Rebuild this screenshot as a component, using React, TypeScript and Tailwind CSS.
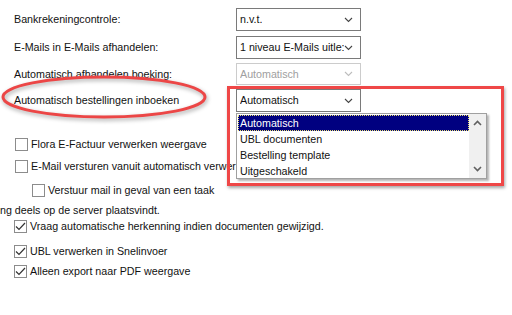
import React from 'react'

const font = "font-['Liberation_Sans',Arial,sans-serif]"

function Chevron({ disabled }: { disabled?: boolean }) {
  return (
    <svg width="9" height="6" viewBox="0 0 9 6" className="shrink-0">
      <path d="M1 1 L4.5 4.5 L8 1" fill="none" stroke={disabled ? '#bdbdbd' : '#444'} strokeWidth="1.1" />
    </svg>
  )
}

function Select({ value, disabled, height = 'h-[23px]' }: { value: string; disabled?: boolean; height?: string }) {
  return (
    <div
      className={`w-[125px] ${height} flex items-center justify-between pl-[3px] pr-[7px] bg-white border ${
        disabled ? 'border-[#cccccc] text-[#a0a0a0]' : 'border-[#7a7a7a] text-[#111]'
      }`}
    >
      <span className="whitespace-nowrap overflow-hidden">{value}</span>
      <Chevron disabled={disabled} />
    </div>
  )
}

function Checkbox({ checked }: { checked?: boolean }) {
  return (
    <div className="w-[13px] h-[13px] border border-[#8c8c8c] bg-white flex items-center justify-center shrink-0">
      {checked && (
        <svg width="11" height="9" viewBox="0 0 11 9">
          <path d="M1 4.5 L4 7.5 L10 1" fill="none" stroke="#333" strokeWidth="1.2" />
        </svg>
      )}
    </div>
  )
}

function Row({ label, children, className = '' }: { label: string; children: React.ReactNode; className?: string }) {
  return (
    <div className={`flex items-center ${className}`}>
      <div className="w-[236px] pl-[14px] whitespace-nowrap">{label}</div>
      {children}
    </div>
  )
}

function CheckRow({ label, checked, className = '' }: { label: string; checked?: boolean; className?: string }) {
  return (
    <div className={`flex items-center h-[13px] gap-[3px] whitespace-nowrap ${className}`}>
      <Checkbox checked={checked} />
      <span>{label}</span>
    </div>
  )
}

export default function App() {
  const options = ['Automatisch', 'UBL documenten', 'Bestelling template', 'Uitgeschakeld']

  return (
    <div className={`relative w-[512px] h-[315px] overflow-hidden bg-white text-[10.7px] text-[#111] ${font}`}>
      <div className="pt-[8px]">
        <Row label="Bankrekeningcontrole:">
          <Select value="n.v.t." />
        </Row>
        <Row label="E-Mails in E-Mails afhandelen:" className="mt-[5px]">
          <Select value="1 niveau E-Mails uitle:" />
        </Row>
        <Row label="Automatisch afhandelen boeking:" className="mt-[4px]">
          <Select value="Automatisch" disabled height="h-[22px]" />
        </Row>
        <Row label="Automatisch bestellingen inboeken" className="mt-[4px]">
          <Select value="Automatisch" />
        </Row>

        <div className="pl-[15px] mt-[26px]">
          <CheckRow label="Flora E-Factuur verwerken weergave" />
          <CheckRow label="E-Mail versturen vanuit automatisch verwerken" className="mt-[9px]" />
          <CheckRow label="Verstuur mail in geval van een taak" className="mt-[11px] pl-[17px]" />
        </div>

        <div className="mt-[6px] h-[14px] leading-[14px] whitespace-nowrap">ng deels op de server plaatsvindt.</div>

        <div className="pl-[14px] mt-[3px]">
          <CheckRow label="Vraag automatische herkenning indien documenten gewijzigd." checked />
          <CheckRow label="UBL verwerken in Snelinvoer" checked className="mt-[12px]" />
          <CheckRow label="Alleen export naar PDF weergave" checked className="mt-[7px]" />
        </div>
      </div>

      {/* red annotation ellipse */}
      <svg
        className="absolute left-0 top-[74px] drop-shadow-[1px_2px_2px_rgba(0,0,0,0.35)]"
        width="212"
        height="48"
        viewBox="0 0 212 48"
      >
        <ellipse cx="104" cy="23" rx="101" ry="20" fill="none" stroke="#ec4646" strokeWidth="3" />
      </svg>

      {/* red annotation rectangle */}
      <div className="absolute left-[227px] top-[86px] w-[277px] h-[100px] border-[3px] border-[#ef4747] shadow-[1px_2px_3px_rgba(0,0,0,0.35)]" />

      {/* open dropdown list */}
      <div className="absolute left-[236px] top-[113px] w-[251px] h-[66px] bg-white border border-[#a0a0a0] shadow-[2px_2px_2px_rgba(0,0,0,0.3)] flex">
        <div className="flex-1 pt-[1px] pl-[1px]">
          {options.map((o, i) => (
            <div
              key={o}
              className={`h-[16px] flex items-center pl-[2px] ${
                i === 0 ? 'bg-[#000080] text-white outline outline-1 outline-dotted outline-[#e8e070] -outline-offset-1' : ''
              }`}
            >
              {o}
            </div>
          ))}
        </div>
        <div className="w-[17px] bg-[#f0f0f0] flex flex-col justify-between items-center py-[6px]">
          <svg width="9" height="6" viewBox="0 0 9 6">
            <path d="M1 5 L4.5 1.5 L8 5" fill="none" stroke="#606060" strokeWidth="1.6" />
          </svg>
          <svg width="9" height="6" viewBox="0 0 9 6">
            <path d="M1 1 L4.5 4.5 L8 1" fill="none" stroke="#606060" strokeWidth="1.6" />
          </svg>
        </div>
      </div>
    </div>
  )
}
